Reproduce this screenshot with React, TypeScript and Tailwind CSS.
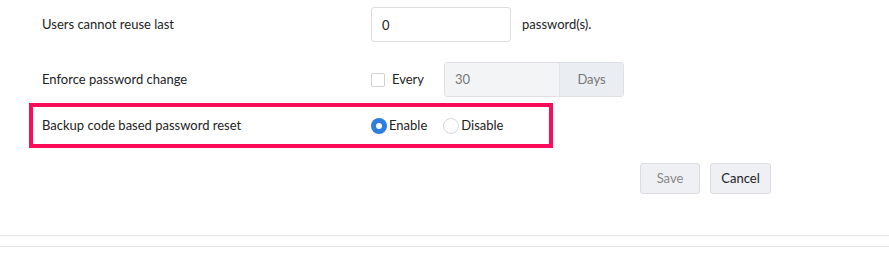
export default function App() {
  return (
    <div className="h-[267px] w-[889px] bg-white text-[13px] text-[#222] font-['Lato','Liberation_Sans',sans-serif]">
      <div className="px-[29px] pt-[7px]">
        <div className="flex h-[35px] items-center px-[13px]">
          <div className="w-[329px]">Users cannot reuse last</div>
          <input
            readOnly
            value="0"
            className="h-[35px] w-[140px] rounded-[3px] border border-[#dcdde0] bg-white px-[10px] text-[13px] text-[#222] outline-none"
          />
          <span className="ml-[11px]">password(s).</span>
        </div>

        <div className="mt-[20px] flex h-[35px] items-center px-[13px]">
          <div className="w-[329px]">Enforce password change</div>
          <span className="h-[14px] w-[14px] rounded-[2px] border border-[#cfd1d5] bg-white" />
          <span className="ml-[7px] w-[52px]">Every</span>
          <div className="flex h-[35px] w-[180px] overflow-hidden rounded-[3px] border border-[#dfe0e4]">
            <div className="flex flex-1 items-center bg-[#f3f4f5] px-[10px] text-[#777]">30</div>
            <div className="flex w-[64px] items-center justify-center border-l border-[#e3e5e8] bg-[#eaedf1] text-[#777]">
              Days
            </div>
          </div>
        </div>

        <div className="mt-[6px] flex h-[45px] w-[524px] items-center border-4 border-[#fb0c5b] px-[9px]">
          <div className="w-[329px]">Backup code based password reset</div>
          <span className="flex h-[16px] w-[16px] items-center justify-center rounded-full bg-[#2f7de1]">
            <span className="h-[6px] w-[6px] rounded-full bg-white" />
          </span>
          <span className="ml-[2px]">Enable</span>
          <span className="ml-[16px] h-[16px] w-[16px] rounded-full border border-[#d6d8dc] bg-white" />
          <span className="ml-[2px]">Disable</span>
        </div>

        <div className="mt-[15px] flex gap-[10px] pl-[611px]">
          <button className="h-[31px] w-[60px] rounded-[3px] border border-[#dcdde0] bg-[#eef0f3] text-[13px] text-[#888]">
            Save
          </button>
          <button className="h-[31px] w-[61px] rounded-[3px] border border-[#dcdde0] bg-[#eef0f3] text-[13px] text-[#222]">
            Cancel
          </button>
        </div>
      </div>

      <div className="mt-[41px] h-px bg-[#e2e2e2]" />
      <div className="mt-[10px] h-px bg-[#e2e2e6]" />
    </div>
  );
}
